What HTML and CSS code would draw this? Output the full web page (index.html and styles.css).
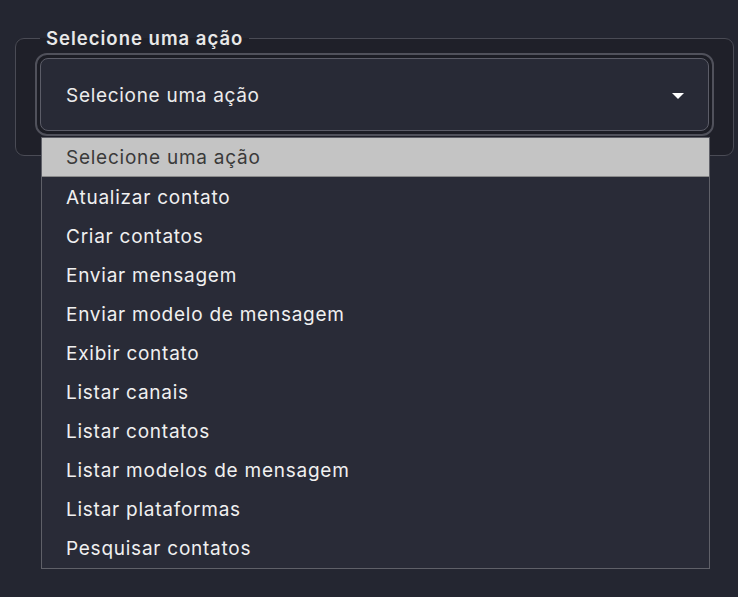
FILE: index.html
```html
<!DOCTYPE html>
<html lang="pt">
<head>
<meta charset="utf-8">
<title>Selecione uma ação</title>
<link rel="stylesheet" href="styles.css">
</head>
<body>
<div class="page">
  <fieldset class="field">
    <legend class="field-label">Selecione uma ação</legend>
    <div class="select-ring">
      <div class="select-box">
        <span class="select-value">Selecione uma ação</span>
        <span class="select-arrow"></span>
      </div>
    </div>
  </fieldset>
  <ul class="dropdown">
    <li class="option option-active">Selecione uma ação</li>
    <li class="option">Atualizar contato</li>
    <li class="option">Criar contatos</li>
    <li class="option">Enviar mensagem</li>
    <li class="option">Enviar modelo de mensagem</li>
    <li class="option">Exibir contato</li>
    <li class="option">Listar canais</li>
    <li class="option">Listar contatos</li>
    <li class="option">Listar modelos de mensagem</li>
    <li class="option">Listar plataformas</li>
    <li class="option">Pesquisar contatos</li>
  </ul>
</div>
</body>
</html>
```

FILE: styles.css
```css
* { box-sizing: border-box; }

html, body {
  margin: 0;
  height: 100%;
  background: #242631;
}

body {
  font-family: Inter, "DejaVu Sans", sans-serif;
  color: #ececec;
}

.page {
  position: relative;
  padding: 28px 4px 0 15px;
  height: 100%;
}

.field {
  margin: 0;
  border: 1px solid #4a4b55;
  border-radius: 9px;
  padding: 0 19px 19px 19px;
  background: #1f2029;
}

.field-label {
  margin-left: 5px;
  padding: 0 6px;
  font-size: 18.5px;
  font-weight: 600;
  letter-spacing: 1px;
  line-height: 20px;
  color: #e8e8e8;
}

.select-ring {
  margin-top: 5px;
  border: 2px solid #50515b;
  border-radius: 12px;
  padding: 3px;
  background: #1c1d25;
}

.select-box {
  display: flex;
  align-items: center;
  justify-content: space-between;
  height: 73px;
  border: 1px solid #5c5d68;
  border-radius: 8px;
  background: #282a36;
  padding: 1px 24px 0 25px;
}

.select-value {
  font-size: 19px;
  letter-spacing: 0.7px;
  color: #ececec;
}

.select-arrow {
  width: 0;
  height: 0;
  border-left: 6px solid transparent;
  border-right: 6px solid transparent;
  border-top: 6px solid #ffffff;
  margin-top: 1px;
}

.dropdown {
  position: absolute;
  left: 41px;
  top: 137px;
  width: 669px;
  margin: 0;
  padding: 0;
  list-style: none;
  border: 1px solid #5f6068;
  background: #292b37;
}

.option {
  height: 39.1px;
  display: flex;
  align-items: center;
  padding: 1px 0 0 24px;
  font-size: 19px;
  letter-spacing: 0.75px;
  color: #f0f0f0;
}

.option-active {
  background: #c4c4c4;
  color: #3a3a3a;
  border-bottom: 1px solid #8a8a8a;
}
```
